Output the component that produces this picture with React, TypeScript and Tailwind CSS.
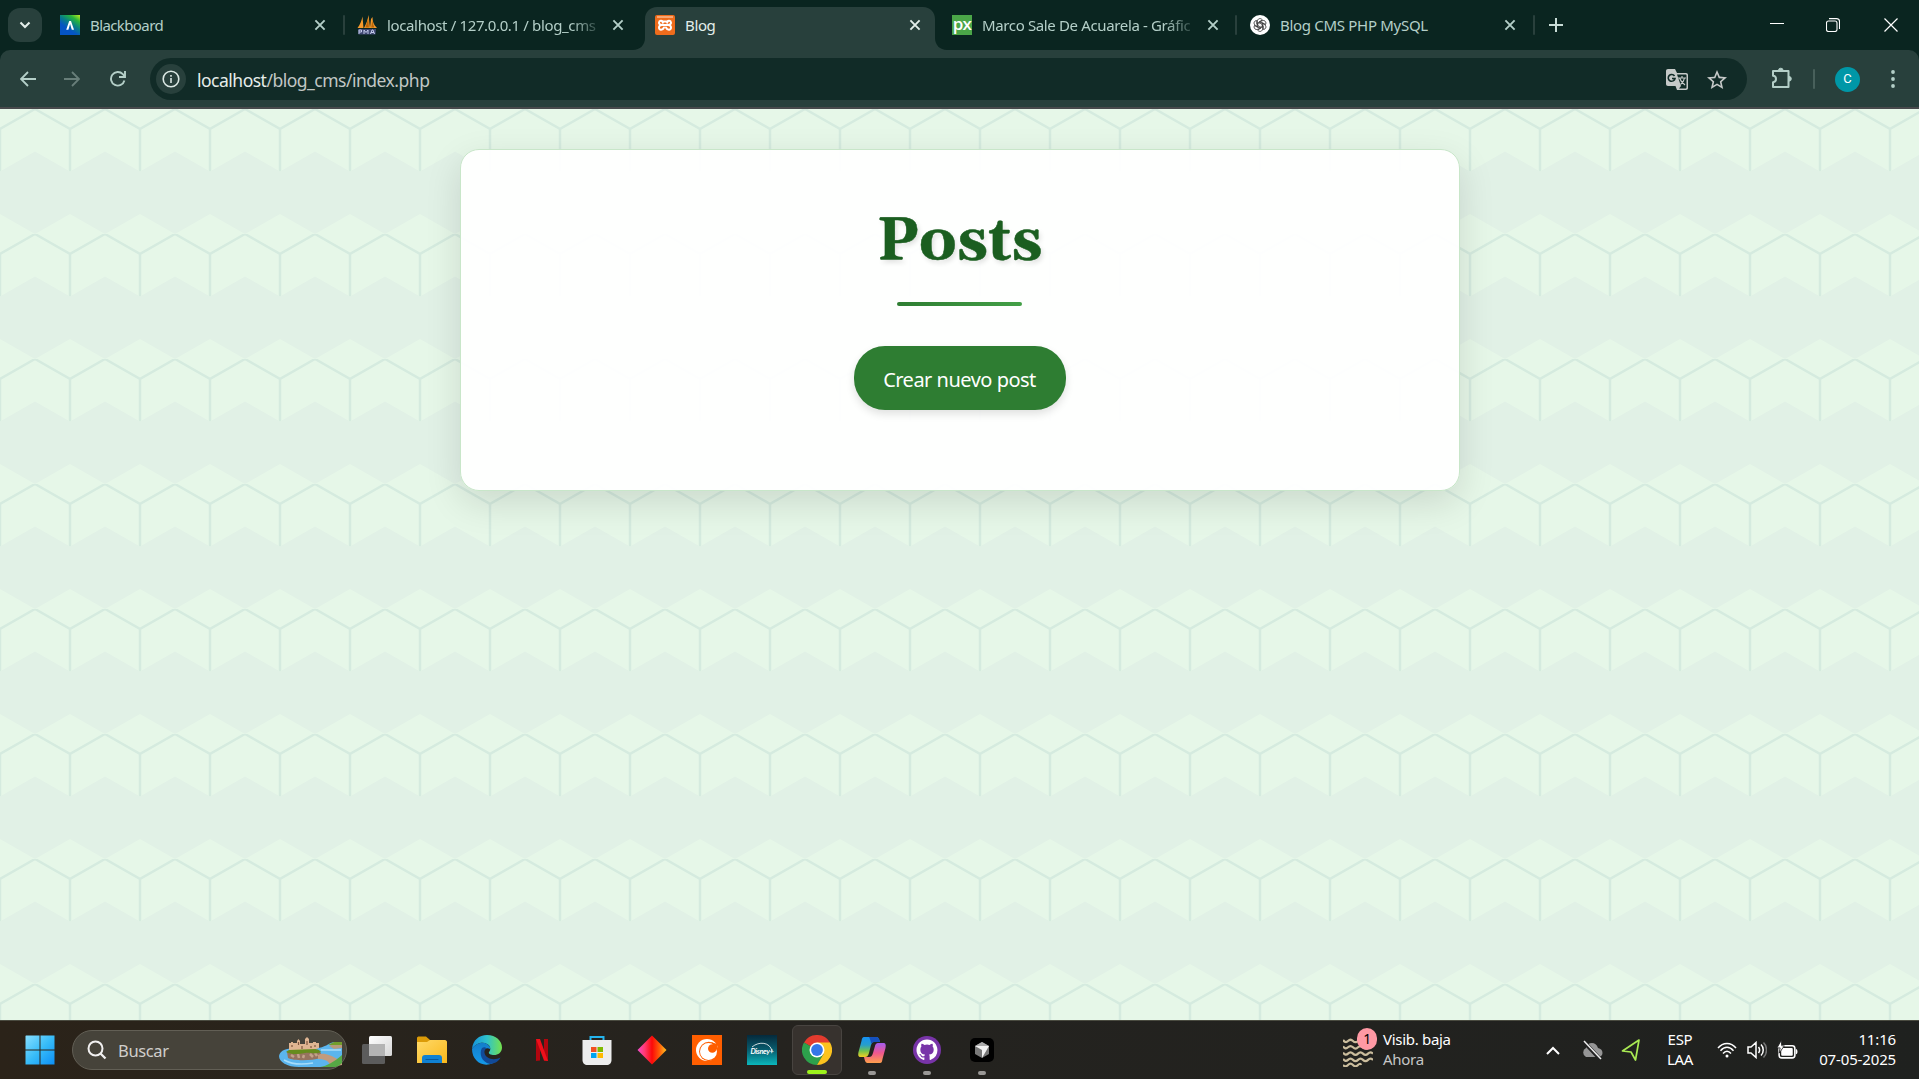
import React from "react";

function CloseX({ className = "" }: { className?: string }) {
  return (
    <svg viewBox="0 0 12 12" className={"h-3 w-3 shrink-0 " + className} fill="none" stroke="currentColor" strokeWidth="1.9">
      <path d="M1.4 1.4l9.2 9.2M10.6 1.4l-9.2 9.2" />
    </svg>
  );
}

function BlackboardIcon() {
  return (
    <svg viewBox="0 0 20 20" className="h-5 w-5 shrink-0">
      <defs>
        <linearGradient id="bb" x1="1" y1="0" x2="0.3" y2="1">
          <stop offset="0" stopColor="#c5e81f" />
          <stop offset="0.25" stopColor="#27b53c" />
          <stop offset="0.5" stopColor="#087f86" />
          <stop offset="0.75" stopColor="#0454c4" />
        </linearGradient>
      </defs>
      <rect width="20" height="20" fill="url(#bb)" />
      <path d="M6.2 14.8L9.2 6h1.8l3 8.8h-2.2L10.1 9l-1.7 5.8z" fill="#fff" />
    </svg>
  );
}

function PmaIcon() {
  return (
    <svg viewBox="0 0 20 20" className="h-5 w-5 shrink-0">
      <path d="M0.5 13C3 10 4.500 6 5.500 1.500L6.500 13zM7 13C9 9 10.800 5 11.500 0L13 13zM13 13l1-9 1.500-2c0 4 1 8 4.500 11z" fill="#f59a2d" />
      <path d="M8.300 12.500l3-9 .6 9zM14.200 12.500l1-7 2 7z" fill="#b96508" />
      <path d="M1 14h18l-.5 5.500h-17z" fill="#3f4872" />
      <path d="M2 19v-4h2.500v2H2M7 19v-4l2 2.500 2-2.500v4M13.500 19l1.500-4h1l1.500 4M14 17.500h3" stroke="#c3caeb" strokeWidth="1" fill="none" />
    </svg>
  );
}

function XamppIcon() {
  return (
    <svg viewBox="0 0 20 20" className="h-5 w-5 shrink-0">
      <rect width="20" height="20" rx="2" fill="#ef6c1c" />
      <rect x="2" y="1" width="16" height="2" fill="#f7a673" />
      <path d="M7 10h6M7.800 7.800C7.800 5.500 4.300 5 4 7.500 3.900 9 5 10 7 10 5 10 3.900 11.200 4 12.800c.2 2.600 3.800 2.500 5-.3M12.200 7.800C12.200 5.500 15.700 5 16 7.500c.1 1.500-1 2.500-3 2.500 2 0 3.100 1.200 3 2.800-.2 2.600-3.800 2.500-5-.3M8 6.500h4" stroke="#fff" strokeWidth="2" fill="none" strokeLinecap="round" />
    </svg>
  );
}

function PxIcon() {
  return (
    <span className="flex h-5 w-5 shrink-0 items-start justify-center bg-[#4ba648] font-['Open_Sans'] text-[17px] leading-[17px] font-semibold tracking-[-0.8px] text-white">
      px
    </span>
  );
}

function ChatGptIcon() {
  return (
    <svg viewBox="0 0 20 20" className="h-5 w-5 shrink-0">
      <circle cx="10" cy="10" r="10" fill="#fff" />
      <g stroke="#333" strokeWidth="0.85" fill="none" strokeLinejoin="round">
        {[0, 60, 120, 180, 240, 300].map((a) => (
          <path key={a} transform={`rotate(${a} 10 10)`} d="M7.400 11.500V6.300C7.400 3.600 10.500 2.700 12 4.600M9 9.200V6.900l3.600-2.100" />
        ))}
      </g>
    </svg>
  );
}

type TabProps = { icon: React.ReactNode; title: string; titleClass: string };

function Tab({ icon, title, titleClass }: TabProps) {
  return (
    <div className="flex h-[50px] items-center text-[#b4cfc8]">
      {icon}
      <span className={"ml-[10px] whitespace-nowrap " + titleClass}>{title}</span>
      <CloseX className="ml-auto" />
    </div>
  );
}

function Divider() {
  return <div className="h-5 w-[2px] shrink-0 rounded bg-[#29403c]" />;
}

function TabStrip() {
  return (
    <div className="flex h-[50px] items-center bg-[#0a2520] font-['Noto_Sans'] text-[15px] tracking-[-0.36px]">
      <div className="ml-2 flex h-[34px] w-[34px] shrink-0 items-center justify-center rounded-[12px] bg-[#28403c]">
        <svg viewBox="0 0 12 8" className="h-2 w-3" fill="none" stroke="#e3eeea" strokeWidth="2.1"><path d="M1.5 1.5L6 6l4.5-4.500" /></svg>
      </div>
      <div className="ml-[18px] w-[266px] shrink-0">
        <Tab icon={<BlackboardIcon />} title="Blackboard" titleClass="tracking-[-0.6px]" />
      </div>
      <div className="ml-[17px]"><Divider /></div>
      <div className="ml-[12px] w-[267px] shrink-0">
        <Tab icon={<PmaIcon />} title="localhost / 127.0.0.1 / blog_cms" titleClass="[mask-image:linear-gradient(to_right,black_88%,transparent_104%)]" />
      </div>
      <div className="relative ml-[21px] h-[50px] w-[290px] shrink-0">
        <svg viewBox="0 0 314 43" className="absolute top-[7px] -left-3 h-[43px] w-[314px]"><path d="M0 43c7 0 12-5 12-12V12C12 5 17 0 24 0h266c7 0 12 5 12 12v19c0 7 5 12 12 12z" fill="#28403c" /></svg>
        <div className="relative flex h-[50px] items-center pl-[10px] text-[#e3eeea]">
          <XamppIcon />
          <span className="ml-[10px]">Blog</span>
          <CloseX className="mr-[14px] ml-auto" />
        </div>
      </div>
      <div className="ml-[17px] w-[267px] shrink-0">
        <Tab icon={<PxIcon />} title="Marco Sale De Acuarela - Gráfic" titleClass="[mask-image:linear-gradient(to_right,black_88%,transparent_104%)]" />
      </div>
      <div className="ml-[16px]"><Divider /></div>
      <div className="ml-[13px] w-[266px] shrink-0">
        <Tab icon={<ChatGptIcon />} title="Blog CMS PHP MySQL" titleClass="tracking-[-0.3px]" />
      </div>
      <div className="ml-[17px]"><Divider /></div>
      <svg viewBox="0 0 14 14" className="ml-[14px] h-[14px] w-[14px]" stroke="#c8dcd6" strokeWidth="2"><path d="M7 0v14M0 7h14" /></svg>
      <div className="mr-[21px] ml-auto flex items-center text-white">
        <svg viewBox="0 0 14 14" className="h-[14px] w-[14px]" stroke="currentColor" strokeWidth="1"><path d="M0 5.500h14" /></svg>
        <svg viewBox="0 0 14 14" className="ml-[42px] h-[14px] w-[14px]" fill="none" stroke="currentColor" strokeWidth="1.1"><rect x=".5" y="3" width="10.5" height="10.5" rx="2" /><path d="M3 .6h7.500c1.700 0 3 1.300 3 3V11" /></svg>
        <svg viewBox="0 0 14 14" className="ml-[44px] h-[14px] w-[14px]" stroke="currentColor" strokeWidth="1.2"><path d="M.5.5l13 13M13.500.5l-13 13" /></svg>
      </div>
    </div>
  );
}

function Toolbar() {
  return (
    <div className="bg-[#0a2520]">
      <div className="flex h-[59px] items-start rounded-t-[10px] border-b-2 border-[#484a4c] bg-[#28403c] pt-2">
        <div className="flex h-[42px] w-full items-center text-[#b4cfc8]">
          <svg viewBox="0 0 16 16" className="ml-5 h-4 w-4" fill="none" stroke="currentColor" strokeWidth="1.8"><path d="M16 8H1.500M8 1L1 8l7 7" /></svg>
          <svg viewBox="0 0 16 16" className="ml-7 h-4 w-4" fill="none" stroke="#687e79" strokeWidth="1.8"><path d="M0 8h14.500M8 1l7 7-7 7" /></svg>
          <svg viewBox="0 0 16 16" className="ml-[30px] h-4 w-4" fill="none" stroke="currentColor" strokeWidth="1.9"><path d="M14.400 9.500A6.800 6.800 0 1 1 12.800 3.200L15 5.600" /><path d="M15 0v6H9" /></svg>
          <div className="ml-[24px] flex h-[42px] w-[1597px] items-center rounded-full bg-[#112b27]">
            <div className="ml-[6px] flex h-[30px] w-[30px] items-center justify-center rounded-full bg-[#28403c]">
              <svg viewBox="0 0 18 18" className="h-[18px] w-[18px]" fill="none" stroke="#dbe8e4" strokeWidth="1.6"><circle cx="9" cy="9" r="7.8" /><path d="M9 8v5M9 5v1.700" /></svg>
            </div>
            <span className="ml-[11px] translate-y-px font-['Noto_Sans'] text-[17.5px] tracking-[-0.5px] text-[#c1c7c5]"><span className="text-[#e6edea]">localhost</span>/blog_cms/index.php</span>
            <svg viewBox="0 0 22 22" className="ml-auto h-[22px] w-[22px] translate-y-px">
              <path d="M2 0h7l2 4h9c1.200 0 2 .8 2 2v13c0 1.200-.8 2-2 2h-9l-1.500-4H2c-1.200 0-2-.8-2-2V2C0 .8.800 0 2 0z" fill="#c5c9c8" />
              <path d="M11 5.500h8.500c.6 0 1 .4 1 1v12c0 .6-.4 1-1 1h-6.500L15 17z" fill="#112b27" />
              <path d="M12 9h8M16 7v2M13.500 9c1 3 3 5 5.500 7M18.500 9c-.5 3-2 5-4 6.500" stroke="#c5c9c8" strokeWidth="1.200" fill="none" />
              <path d="M8.500 7A3.400 3.400 0 1 0 9 9.500H6" stroke="#112b27" strokeWidth="1.600" fill="none" />
            </svg>
            <svg viewBox="0 0 24 24" className="mr-[18px] ml-[17px] h-6 w-6 translate-y-px" fill="#c5c9c8"><path d="M22 9.240l-7.190-.62L12 2 9.190 8.630 2 9.240l5.460 4.730L5.820 21 12 17.270 18.180 21l-1.630-7.030L22 9.240zM12 15.400l-3.760 2.270 1-4.280-3.320-2.880 4.380-.38L12 6.100l1.710 4.040 4.380.38-3.320 2.880 1 4.280L12 15.400z" /></svg>
          </div>
          <svg viewBox="0 0 24 24" className="ml-[23px] h-6 w-6 -translate-y-px" fill="none" stroke="currentColor" strokeWidth="2" strokeLinejoin="round"><path d="M3 5h15.500v16H3v-4.800c4-.2 4-6.200 0-6.400z" /><path d="M8.500 4.500a2.300 2.300 0 0 1 4.600 0zM19 10.500a2.300 2.300 0 0 1 0 4.600z" fill="currentColor" strokeWidth="1" /></svg>
          <div className="ml-[19px] h-5 w-[2px] rounded bg-[#48605b]" />
          <div className="ml-[20px] flex h-[25px] w-[25px] items-center justify-center rounded-full bg-[#0097a7] font-['Roboto'] text-[13px] text-white">C</div>
          <svg viewBox="0 0 4 18" className="ml-[31px] h-[18px] w-1" fill="currentColor"><circle cx="2" cy="2" r="1.900" /><circle cx="2" cy="9" r="1.900" /><circle cx="2" cy="16" r="1.900" /></svg>
        </div>
      </div>
    </div>
  );
}

function HexBackground() {
  return (
    <svg className="absolute inset-0 h-full w-full">
      <defs>
        <pattern id="hex" width="70" height="125" patternUnits="userSpaceOnUse">
          <g transform="scale(1.25)">
            <path d="M0 50V16L28 0L56 16V50" fill="none" stroke="#d5ebdf" strokeWidth="2" />
            <path d="M28 34L0 50V84L28 100L56 84V50z" fill="#e1f1e6" />
          </g>
        </pattern>
      </defs>
      <rect width="100%" height="100%" fill="#e6f7e8" />
      <rect width="100%" height="100%" fill="url(#hex)" />
    </svg>
  );
}

function Page() {
  return (
    <main className="relative flow-root h-[911px] shrink-0 overflow-hidden">
      <HexBackground />
      <section className="relative mx-auto mt-[40px] flex h-[342px] w-[1000px] flex-col items-center rounded-[19px] border border-[#c8e6c9] bg-white/95 shadow-[0_12px_36px_rgba(0,0,0,0.12)]">
        <h1 className="mt-[52px] font-['Gelasio','Georgia','DejaVu_Serif','Liberation_Serif',serif] text-[60px] leading-[80px] font-bold text-[#1b5e20] [-webkit-text-stroke:0.5px_#1b5e20] [text-shadow:2px_3px_5px_rgba(0,0,0,0.12)]">Posts</h1>
        <div className="mt-[20px] h-1 w-[125px] shrink-0 rounded-full bg-linear-to-r from-[#2e7d32] to-[#43a047]" />
        <button className="mt-[40px] h-16 w-[212px] rounded-[31px] bg-[#2e7d32] pt-[3px] font-['Noto_Sans'] text-[20px] tracking-[-0.5px] text-white shadow-[0_4px_8px_rgba(0,0,0,0.12)]">Crear nuevo post</button>
      </section>
    </main>
  );
}

function Castle() {
  return (
    <svg viewBox="0 0 64 30" className="h-[30px] w-[64px]">
      <path d="M0 19C1 13 8 11 18 11h20c7 0 12-5 17-6h8v18c-3 5-10 7-24 7H20C8 30 0 25 0 19z" fill="#5bb5ee" />
      <path d="M5 23c7 4 18 5 29 3M42 13h20" stroke="#a6dcfa" strokeWidth="1.500" fill="none" />
      <path d="M8 15c5-4 25-5 32-1 3 3 4 6 1 7-8 3-27 3-32 0z" fill="#96735f" />
      <path d="M12 18l3 2M19 17l1 4M25 18l-1 3M31 17l3 3M36 16l2 3" stroke="#c2a28a" strokeWidth="2.500" fill="none" />
      <path d="M7 15c4-4 9-3 13-3s19-2 22 3c-6 3-10 0-16 1s-13 2-19-1z" fill="#668c1d" />
      <path d="M10 13V6h2V5h2v1h4V4l1.500-2L21 4v3h5V2l2-2 2 2v4h4v-1h3v1h3v5l-3 1z" fill="#dfb592" />
      <path d="M13 8v2M19.500 5v3M28 4v4M36 8v2M23 9v3M32 9v2" stroke="#80563e" strokeWidth="1.200" />
      <path d="M39 18c5-3 10-1 24 6v4l-12 2c0-6-5-8-12-8z" fill="#c29b7e" />
      <path d="M41 30c7-1 14-5 22-12v8c-4 4-8 5-14 4z" fill="#56a845" />
      <path d="M50 9l5-2h8v4l-8 1z" fill="#b79a7c" /><path d="M49 8l6-3h8v3z" fill="#739d2c" />
    </svg>
  );
}

function Slot({ children, className = "", mark = "" }: { children: React.ReactNode; className?: string; mark?: string }) {
  return (
    <div className={"relative flex h-[50px] w-[50px] shrink-0 items-center justify-center rounded-[6px] " + className}>
      {children}
      {mark && <span className={"absolute bottom-0 rounded-full " + mark} />}
    </div>
  );
}

function Apps() {
  return (
    <div className="ml-[5px] flex items-center gap-[5px]">
      <Slot>
        <svg viewBox="0 0 30 28" className="h-7 w-[30px]">
          <defs><linearGradient id="tv" x2="1" y2="1"><stop stopColor="#fff" /><stop offset="1" stopColor="#d6d6d6" /></linearGradient></defs>
          <rect x="7" width="23" height="20" rx="1.500" fill="url(#tv)" /><rect y="8" width="23" height="20" rx="1.500" fill="#5c5c5c" /><path d="M7 8h16v12H7z" fill="#b4b4b4" />
        </svg>
      </Slot>
      <Slot>
        <svg viewBox="0 0 30 28" className="h-7 w-[30px]">
          <defs><linearGradient id="fo" x2="1" y2="1"><stop stopColor="#ffd968" /><stop offset="1" stopColor="#f9b81b" /></linearGradient></defs>
          <path d="M0 2C0 1 1 .5 2 .5h7L13 4v5H0z" fill="#dc9b08" /><path d="M0 6h10l3-2h15c1 0 2 1 2 2v21H0z" fill="url(#fo)" />
          <path d="M5 27v-5c0-2 1-3 3-3h14c2 0 3 1 3 3v5z" fill="#1081d3" /><path d="M9 23.500h12" stroke="#0759a0" strokeWidth="1.200" strokeLinecap="round" />
        </svg>
      </Slot>
      <Slot>
        <svg viewBox="0 0 30 30" className="h-[30px] w-[30px]">
          <defs>
            <linearGradient id="e1" x1="0" x2="1"><stop stopColor="#1592dc" /><stop offset=".5" stopColor="#2fc2cb" /><stop offset="1" stopColor="#74e24d" /></linearGradient>
            <linearGradient id="e2" x2="0" y2="1"><stop stopColor="#137dca" /><stop offset="1" stopColor="#159aea" /></linearGradient>
          </defs>
          <path d="M0 14C1 5 7 0 15 0c9 0 15 6 15 12.500 0 5-4 7.500-8 7.500-3 0-6-1-5-3 2-2 2-6-2-8C10 6 3 9 0 14z" fill="url(#e1)" />
          <path d="M0 14C3 9 10 6 15 9c3 2 3.500 4 3 5-3-2-7 0-7 4 0 6 5 10 10 10-10 5-21-2-21-14z" fill="url(#e2)" />
          <path d="M10 13c-3 5-1 14 8 16 5-.5 9-3 10.500-6.500C22 26 14 24 12.500 18c-.5-2.500 1-4 2-4.500-1-1.500-3-1.500-4.500-.5z" fill="#114a98" />
        </svg>
      </Slot>
      <Slot>
        <svg viewBox="0 0 12 22" className="h-[22px] w-3"><path d="M0 0h4v21.500L0 22zM8 0h4v22l-4-.5z" fill="#b1060f" /><path d="M0 0h4l8 22-4-.5z" fill="#ee101b" /></svg>
      </Slot>
      <Slot>
        <svg viewBox="0 0 30 30" className="h-[30px] w-[30px]">
          <path d="M8.500 7V2h13v5" stroke="#24b4ed" strokeWidth="2" fill="none" /><path d="M.5 5h29v20c0 3-2 5-5 5h-19c-3 0-5-2-5-5z" fill="#ededed" />
          <path d="M9 12h5.500v5H9z" fill="#f25022" /><path d="M15.500 12H21v5h-5.500z" fill="#7fba00" /><path d="M9 18h5.500v5H9z" fill="#00a4ef" /><path d="M15.500 18H21v5h-5.500z" fill="#ffb900" />
        </svg>
      </Slot>
      <Slot>
        <svg viewBox="0 0 30 30" className="h-[30px] w-[30px]">
          <defs><linearGradient id="di"><stop stopColor="#f44cce" /><stop offset=".25" stopColor="#ff3970" /><stop offset=".5" stopColor="#fb0909" /><stop offset=".75" stopColor="#ff5a08" /><stop offset="1" stopColor="#ffc422" /></linearGradient></defs>
          <path d="M15 .5L29.500 15 15 29.500.5 15z" fill="url(#di)" />
        </svg>
      </Slot>
      <Slot>
        <svg viewBox="0 0 30 30" className="h-[30px] w-[30px]">
          <rect width="30" height="30" fill="#ff5e00" />
          <circle cx="15" cy="15" r="11" fill="#fff" />
          <circle cx="16.800" cy="16.500" r="9.700" fill="#ff5e00" />
          <circle cx="16.500" cy="16.500" r="8.500" fill="#fff" />
          <circle cx="20.300" cy="13.500" r="4.300" fill="#ff5e00" />
          <path d="M19 7l6 2 1 6-2-1z" fill="#ff5e00" />
        </svg>
      </Slot>
      <Slot>
        <div className="relative flex h-[30px] w-[30px] items-center justify-center bg-linear-to-b from-[#052a3c] via-[#075e70] to-[#0bb8bd]">
          <svg viewBox="0 0 30 30" className="absolute inset-0 h-full w-full"><path d="M5 12C12 6 23 7 25 16" stroke="#fff" strokeWidth=".8" fill="none" /></svg>
          <span className="relative mt-[3px] font-['Lato'] text-[7.5px] leading-none font-bold tracking-[-0.4px] text-white italic">Disney+</span>
        </div>
      </Slot>
      <Slot className="border border-[#484440] bg-[#37322e]" mark="h-1 w-5 bg-[#9df21c]">
        <svg viewBox="0 0 30 30" className="h-[30px] w-[30px]">
          <path d="M15 15L2 7.500A15 15 0 0 1 28 7.500z" fill="#e33b2e" /><path d="M15 15L2 7.500A15 15 0 0 0 15 30l6.500-11z" fill="#2da14c" /><path d="M15 7.500h13A15 15 0 0 1 15 30l6.500-11z" fill="#fcc31e" />
          <circle cx="15" cy="15" r="7.500" fill="#fff" /><circle cx="15" cy="15" r="5.900" fill="#3477e8" />
        </svg>
      </Slot>
      <Slot mark="h-1 w-2 bg-[#9a9896]">
        <svg viewBox="0 0 28 26" className="h-[26px] w-7">
          <defs>
            <linearGradient id="c1" x2="0" y2="1"><stop stopColor="#1591f4" /><stop offset=".4" stopColor="#279ecb" /><stop offset=".7" stopColor="#71c34d" /><stop offset="1" stopColor="#f4cf22" /></linearGradient>
            <linearGradient id="c2" x2="0" y2="1"><stop stopColor="#a45cf0" /><stop offset=".5" stopColor="#ef578e" /><stop offset="1" stopColor="#ffa04c" /></linearGradient>
          </defs>
          <path d="M6 0h12c2 0 3 1 4 5h-6c-2 0-2 1-3 3l-2 8c-1 3-2 4-4 4H3c-3 0-3-2-2.500-5l3-11C4 1 4.500 0 6 0z" fill="url(#c1)" />
          <path d="M13 0h5c2 0 3 1 4 5h-6c-2 0-2 1-3 2 0-3-1-5-2-7z" fill="#1550bd" />
          <path d="M22 26H10c-2 0-3-1-4-6h5c2 0 3-1 4-4l2-7c1-3 2-3 4-3h4c3 0 3 2 2.500 5l-3 11c-.5 3-1 4-2.500 4z" fill="url(#c2)" />
        </svg>
      </Slot>
      <Slot mark="h-1 w-2 bg-[#9a9896]">
        <svg viewBox="0 0 28 28" className="h-7 w-7">
          <circle cx="14" cy="14" r="14" fill="#7834a8" />
          <path transform="translate(3.500 3.500) scale(1.310)" fill="#fff" d="M8 0C3.580 0 0 3.580 0 8c0 3.540 2.290 6.530 5.470 7.590.4.070.55-.17.55-.38v-1.490c-2.010.37-2.530-.49-2.690-.94-.09-.23-.48-.94-.82-1.130-.28-.15-.68-.52-.01-.53.63-.01 1.080.58 1.230.82.720 1.210 1.870.87 2.330.66.070-.52.280-.87.510-1.070-1.780-.2-3.640-.89-3.640-3.950 0-.87.310-1.590.820-2.150-.08-.2-.36-1.020.08-2.120 0 0 .67-.21 2.200.82a7.500 7.500 0 0 1 4 0c1.530-1.040 2.200-.82 2.200-.82.440 1.100.160 1.920.080 2.120.51.560.820 1.270.820 2.150 0 3.070-1.870 3.750-3.650 3.950.290.250.540.730.540 1.480v2.200c0 .21.150.46.550.38A8 8 0 0 0 16 8c0-4.420-3.580-8-8-8z" />
        </svg>
      </Slot>
      <Slot mark="h-1 w-2 bg-[#9a9896]">
        <svg viewBox="0 0 24 24" className="h-6 w-6"><rect width="24" height="24" rx="5" fill="#000" /><path d="M12 4l7 4v8l-7 4-7-4V8z" fill="#777" /><path d="M12 4l7 4H5z" fill="#aaa" /><path d="M5 8h14l-7 12v-8z" fill="#f2f2f2" /></svg>
      </Slot>
    </div>
  );
}

function Tray() {
  return (
    <div className="ml-auto flex h-full items-center font-['Noto_Sans'] text-[15px] leading-[20px] tracking-[-0.3px] text-white">
      <div className="relative h-[38px] w-[30px]">
        <svg viewBox="0 0 30 29" className="absolute bottom-[2px] h-[29px] w-[30px]" fill="none" stroke="#cbbd9d" strokeWidth="2.200">
          {[2, 8.300, 14.600, 20.900].map((y) => <path key={y} d={`M0 ${y}q2.500 3.500 5 1t5 0t5 0t5 0t5 0t5 0`} />)}
          <path d="M0 27q2.500 2.500 5 0t5 0t5 0t3 0" />
        </svg>
        <span className="absolute -top-[3px] left-[14px] flex h-[22px] w-5 items-center justify-center rounded-full bg-[#ff99a4] text-[14px] text-black">1</span>
      </div>
      <div className="-mt-[2px] ml-[10px] w-[150px]"><div>Visib. baja</div><div className="text-[#c6c6c6]">Ahora</div></div>
      <svg viewBox="0 0 14 9" className="ml-[13px] h-[9px] w-[14px]" fill="none" stroke="#fff" strokeWidth="2"><path d="M1 8l6-6 6 6" /></svg>
      <svg viewBox="0 0 22 20" className="ml-[21px] h-5 w-[22px]"><path d="M5 17a5 5 0 0 1 0-9C6 2 15 1 17 8c6 1 6 9 0 9z" fill="#969696" /><path d="M2 1l17 18" stroke="#222" strokeWidth="4" /><path d="M3 1l17 18" stroke="#eee" strokeWidth="1.500" /></svg>
      <svg viewBox="0 0 20 24" className="ml-[18px] h-6 w-5" fill="none" stroke="#a9e953" strokeWidth="1.700" strokeLinejoin="round"><path d="M18 2L1.500 13l8.500 1 4.500 8z" /></svg>
      <div className="-mt-[2px] ml-[25px] w-7 text-center">ESP<br />LAA</div>
      <svg viewBox="0 0 20 16" className="ml-[23px] h-4 w-5" fill="none" stroke="#fff" strokeWidth="1.500"><path d="M1 6C6 0 14 0 19 6M3.500 8.700c4-4.500 9-4.500 13 0M6 11.500c2.500-3 5.500-3 8 0" /><circle cx="10" cy="14" r="1.500" fill="#fff" stroke="none" /></svg>
      <svg viewBox="0 0 20 18" className="ml-[10px] h-[18px] w-5" fill="none" stroke="#fff" strokeWidth="1.500"><path d="M1 6h3l5-4.500v15L4 12H1zM11.500 6c1.500 2 1.500 4 0 6M14 3.500c3 3 3 8 0 11" /><path d="M16.500 1.500c4 4 4 11 0 15" stroke="#777" /></svg>
      <svg viewBox="0 0 20 18" className="ml-[10px] h-[20px] w-[21px]"><rect x="2" y="5" width="15" height="11.500" rx="2.500" fill="none" stroke="#fff" strokeWidth="1.500" /><rect x="4" y="7" width="11" height="7.500" rx="1" fill="#fff" /><path d="M18 8c2 0 2 5 0 5z" fill="#fff" /><path d="M4 0L0 7h3l-1 5 5-7H4.500z" fill="#fff" stroke="#222" strokeWidth=".8" /></svg>
      <div className="-mt-[3px] mr-[23px] w-[98px] text-right tracking-[-0.15px]">11:16<br />07-05-2025</div>
    </div>
  );
}

function Taskbar() {
  return (
    <footer className="flex h-[59px] shrink-0 items-center border-t border-[#4a4b40] bg-linear-to-r from-[#2b2319] via-[#25231f] via-40% to-[#1f211f]">
      <svg viewBox="0 0 30 30" className="ml-[25px] h-[30px] w-[30px]">
        <defs><linearGradient id="wi" x2="30" y2="30" gradientUnits="userSpaceOnUse"><stop stopColor="#8ae0ff" /><stop offset=".5" stopColor="#38bcf8" /><stop offset="1" stopColor="#0b8df5" /></linearGradient></defs>
        <path d="M1 .5h13.500v14H.5V1zM15.500.5h14v14h-14zM.5 15.500h14v14H.5zM15.500 15.500h14v14h-14z" fill="url(#wi)" />
      </svg>
      <div className="ml-[17px] flex h-10 w-[275px] items-center rounded-full border border-[#625f55] bg-[#46433a]">
        <svg viewBox="0 0 20 20" className="ml-[14px] h-5 w-5" fill="none" stroke="#f1f0f0" strokeWidth="2"><circle cx="8.500" cy="8.500" r="7" /><path d="M13.500 13.500L18.500 18.500" strokeWidth="2.300" /></svg>
        <span className="ml-[11px] translate-y-px font-['Noto_Sans'] text-[16.5px] tracking-[-0.35px] text-[#d0cecb]">Buscar</span>
        <div className="mt-[3px] mr-[3px] ml-auto"><Castle /></div>
      </div>
      <Apps />
      <Tray />
    </footer>
  );
}

export default function App() {
  return (
    <div className="flex h-[1079px] w-[1919px] flex-col overflow-hidden">
      <TabStrip />
      <Toolbar />
      <Page />
      <Taskbar />
    </div>
  );
}
